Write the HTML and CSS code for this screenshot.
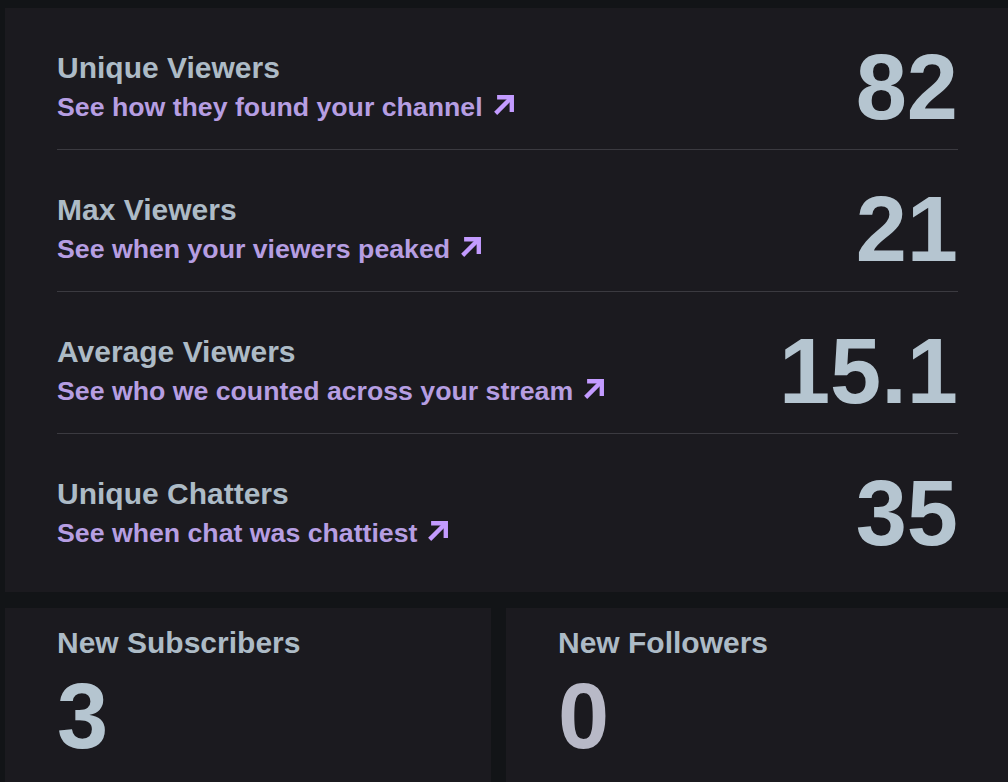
FILE: index.html
```html
<!DOCTYPE html>
<html lang="en">
<head>
<meta charset="utf-8">
<title>Stream Summary</title>
<link rel="stylesheet" href="styles.css">
</head>
<body>
<main class="page">
  <section class="card stats">
    <div class="row">
      <div class="text">
        <div class="label">Unique Viewers</div>
        <a class="link" href="#">See how they found your channel<svg class="arrow" viewBox="0 0 24 24"><path d="M5 19 L17.5 6.5"/><path d="M7 5 H19 V17"/></svg></a>
      </div>
      <div class="num">82</div>
    </div>
    <div class="row">
      <div class="text">
        <div class="label">Max Viewers</div>
        <a class="link" href="#">See when your viewers peaked<svg class="arrow" viewBox="0 0 24 24"><path d="M5 19 L17.5 6.5"/><path d="M7 5 H19 V17"/></svg></a>
      </div>
      <div class="num">21</div>
    </div>
    <div class="row">
      <div class="text">
        <div class="label">Average Viewers</div>
        <a class="link" href="#">See who we counted across your stream<svg class="arrow" viewBox="0 0 24 24"><path d="M5 19 L17.5 6.5"/><path d="M7 5 H19 V17"/></svg></a>
      </div>
      <div class="num">15.1</div>
    </div>
    <div class="row">
      <div class="text">
        <div class="label">Unique Chatters</div>
        <a class="link" href="#">See when chat was chattiest<svg class="arrow" viewBox="0 0 24 24"><path d="M5 19 L17.5 6.5"/><path d="M7 5 H19 V17"/></svg></a>
      </div>
      <div class="num">35</div>
    </div>
  </section>
  <section class="bottom">
    <div class="card small">
      <div class="label">New Subscribers</div>
      <div class="big">3</div>
    </div>
    <div class="card small">
      <div class="label">New Followers</div>
      <div class="big muted">0</div>
    </div>
  </section>
</main>
</body>
</html>
```
FILE: styles.css
```css
html, body {
  margin: 0;
  padding: 0;
  overflow: hidden;
  background: #121417;
}
body {
  font-family: "Liberation Sans", Arial, Helvetica, sans-serif;
  font-weight: 700;
}
.page {
  padding: 8px 0 0 5px;
  display: flex;
  flex-direction: column;
  gap: 16px;
}
.card {
  background: #1b1a1f;
}
.stats {
  padding: 0 50px 0 52px;
}
.row {
  display: flex;
  align-items: center;
  justify-content: space-between;
  padding: 42px 0 24px;
  border-bottom: 1px solid #3b3a40;
}
.row:last-child {
  border-bottom: none;
  padding-bottom: 41px;
}
.text {
  display: flex;
  flex-direction: column;
}
.label {
  font-size: 30px;
  line-height: 36px;
  color: #adbbc6;
}
.link {
  margin-top: 3px;
  font-size: 26.7px;
  line-height: 36px;
  color: #b69ee2;
  text-decoration: none;
  display: flex;
  align-items: center;
}
.arrow {
  width: 25px;
  height: 25px;
  margin-left: 9px;
  margin-top: -5px;
  fill: none;
  stroke: #c39bff;
  stroke-width: 4.2;
  stroke-linecap: square;
  stroke-linejoin: miter;
}
.num {
  font-size: 92px;
  line-height: 75px;
  color: #b5c5d0;
}
.bottom {
  display: grid;
  grid-template-columns: 486px 1fr;
  gap: 15px;
}
.small {
  padding: 17px 52px 48px;
}
.big {
  margin-top: 10px;
  font-size: 92px;
  line-height: 90px;
  color: #b5c5d0;
}
.big.muted {
  color: #b8b9c7;
}
```
